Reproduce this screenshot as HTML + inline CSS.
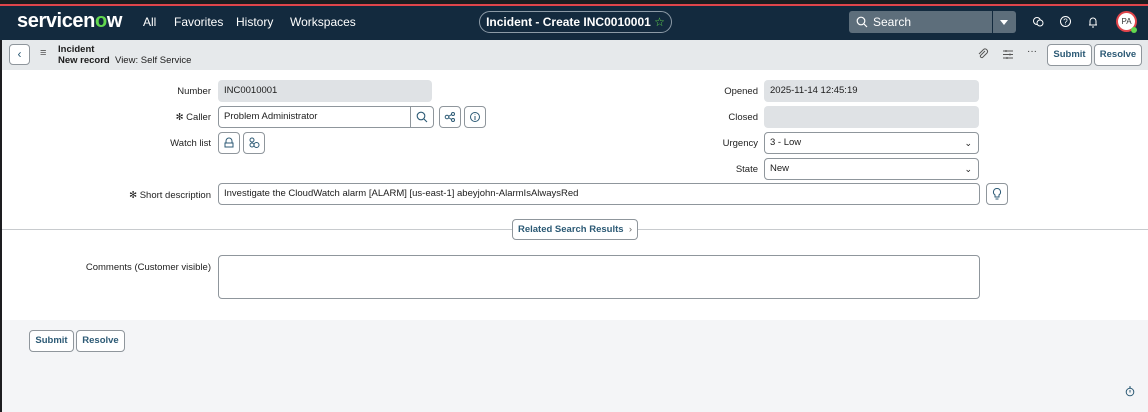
<!DOCTYPE html>
<html><head><style>
*{box-sizing:border-box;margin:0;padding:0}
body{width:1148px;height:412px;overflow:hidden;background:#1d1d20;font-family:"Liberation Sans",sans-serif;position:relative;font-size:9.5px;color:#1c1c1c}
#top{position:absolute;left:0;top:0;width:1148px;height:4px;background:#1d1d20}
#red{position:absolute;left:0;top:4px;width:1148px;height:2px;background:#e0454b}
#nav{position:absolute;left:0;top:6px;width:1148px;height:34px;background:#132a3e;color:#fff}
.abs{position:absolute}
#page{position:absolute;left:2px;top:40px;width:1146px;height:372px;background:#fff}
#sub{position:absolute;left:0;top:0;width:1146px;height:30px;background:#e6e9eb}
.btn{position:absolute;border:1px solid #8f969c;border-radius:4px;background:#fff;color:#2c5a75;font-weight:bold;font-size:9.5px;text-align:center}
.lbl{position:absolute;text-align:right;font-size:9.5px;color:#222}
.ro{position:absolute;background:#dfe2e5;border-radius:4px;font-size:9.5px;padding-left:6px}
.in{position:absolute;background:#fff;border:1px solid #8f969c;border-radius:4px;font-size:9.5px;padding-left:5px}
.ib{position:absolute;border:1px solid #8f969c;border-radius:4px;background:#fff}
</style></head><body>
<div id="top"></div><div id="red"></div>
<div id="nav">
<div class="abs" style="left:17px;top:4px;font-size:20px;font-weight:bold;letter-spacing:-0.4px">servicen<span style="color:#62d84e">o</span>w</div>
<div class="abs" style="left:143px;top:9px;font-size:12px">All</div>
<div class="abs" style="left:174px;top:9px;font-size:12px">Favorites</div>
<div class="abs" style="left:236px;top:9px;font-size:12px">History</div>
<div class="abs" style="left:290px;top:9px;font-size:12px">Workspaces</div>
<div class="abs" style="left:479px;top:5px;width:193px;height:22px;border:1px solid #8c9aa6;border-radius:11px;text-align:center;font-size:12px;font-weight:bold;line-height:20px">Incident - Create INC0010001 <span style="color:#62d84e;font-weight:normal">☆</span></div>
<div class="abs" style="left:849px;top:5px;width:143px;height:22px;background:#5d6e7b;border-radius:3px 0 0 3px;font-size:12px;line-height:22px;padding-left:24px">Search</div>
<svg class="abs" style="left:856px;top:10px" width="12" height="12"><circle cx="5" cy="5" r="3.8" fill="none" stroke="#fff" stroke-width="1.2"/><path d="M8 8l3 3" stroke="#fff" stroke-width="1.2"/></svg>
<div class="abs" style="left:993px;top:5px;width:23px;height:22px;background:#5d6e7b;border-radius:0 3px 3px 0"></div>
<div class="abs" style="left:1000px;top:14px;border-left:4px solid transparent;border-right:4px solid transparent;border-top:5px solid #fff"></div>
<svg class="abs" style="left:1032px;top:10px" width="12" height="12"><circle cx="5" cy="5" r="3.5" fill="none" stroke="#fff"/><circle cx="8" cy="7" r="3" fill="#132a3e" stroke="#fff"/></svg>
<svg class="abs" style="left:1059px;top:9px" width="13" height="13"><circle cx="6.5" cy="6.5" r="5" fill="none" stroke="#fff"/><text x="4.3" y="9.5" font-size="8" fill="#fff" font-family="Liberation Sans">?</text></svg>
<svg class="abs" style="left:1087px;top:9px" width="12" height="13"><path d="M2 10h8M3 10V6a3 3 0 016 0v4M5 12h2" fill="none" stroke="#fff"/></svg>
<div class="abs" style="left:1116px;top:5px;width:21px;height:21px;border-radius:50%;background:#e0454b;padding:2px"><div style="width:17px;height:17px;border-radius:50%;background:#fff;color:#333;font-size:8px;line-height:17px;text-align:center">PA</div></div>
<div class="abs" style="left:1131px;top:21px;width:6px;height:6px;border-radius:50%;background:#62d84e"></div>
</div>
<div id="page">
<div id="sub">
<div class="btn" style="left:7px;top:4px;width:21px;height:21px;line-height:19px;font-weight:normal;font-size:12px">‹</div>
<div class="abs" style="left:38px;top:7px;font-size:11px;color:#555">≡</div>
<div class="abs" style="left:56px;top:4px;font-weight:bold">Incident</div>
<div class="abs" style="left:56px;top:15px"><b>New record</b> &nbsp;View: Self Service</div>
<svg class="abs" style="left:975px;top:8px" width="12" height="13"><path d="M8 3L3.5 7.5a1.5 1.5 0 002 2L10 5a2.5 2.5 0 00-3.5-3.5L2 6" fill="none" stroke="#555"/></svg>
<svg class="abs" style="left:1000px;top:9px" width="12" height="11"><path d="M1 2h10M1 5.5h10M1 9h10" stroke="#555"/><path d="M4 1v2M8 4.5v2M5 8v2" stroke="#555"/></svg>
<div class="abs" style="left:1025px;top:6px;font-size:10px;color:#333">···</div>
<div class="btn" style="left:1045px;top:4px;width:45px;height:22px;line-height:20px">Submit</div>
<div class="btn" style="left:1092px;top:4px;width:48px;height:22px;line-height:20px">Resolve</div>
</div>
<div class="lbl" style="left:100px;top:46px;width:109px">Number</div>
<div class="ro" style="left:216px;top:40px;width:214px;height:22px;line-height:22px">INC0010001</div>
<div class="lbl" style="left:100px;top:72px;width:109px">✻ Caller</div>
<div class="in" style="left:216px;top:66px;width:216px;height:22px;line-height:20px">Problem Administrator</div>
<div class="abs" style="left:408px;top:66px;width:1px;height:22px;background:#8f969c"></div>
<svg class="abs" style="left:414px;top:71px" width="12" height="12"><circle cx="5" cy="5" r="3.8" fill="none" stroke="#2c5a75" stroke-width="1.1"/><path d="M8 8l3 3" stroke="#2c5a75" stroke-width="1.1"/></svg>
<div class="ib" style="left:437px;top:66px;width:22px;height:22px"></div>
<svg class="abs" style="left:442px;top:71px" width="12" height="12"><circle cx="3" cy="6" r="1.8" fill="none" stroke="#2c5a75"/><circle cx="9" cy="3" r="1.5" fill="none" stroke="#2c5a75"/><circle cx="9" cy="9" r="1.5" fill="none" stroke="#2c5a75"/><path d="M4.5 5.5L7.5 3.5M4.5 6.5L7.5 8.5" stroke="#2c5a75"/></svg>
<div class="ib" style="left:462px;top:66px;width:22px;height:22px"></div>
<svg class="abs" style="left:467px;top:71px" width="12" height="12"><circle cx="6" cy="6" r="4.5" fill="none" stroke="#2c5a75"/><path d="M6 5v4M6 3.5v.5" stroke="#2c5a75"/></svg>
<div class="lbl" style="left:100px;top:98px;width:109px">Watch list</div>
<div class="ib" style="left:216px;top:92px;width:22px;height:22px"></div>
<svg class="abs" style="left:221px;top:97px" width="12" height="12"><path d="M3 6V4a3 3 0 016 0v2M2 6h8v4H2z" fill="none" stroke="#2c5a75"/></svg>
<div class="ib" style="left:241px;top:92px;width:22px;height:22px"></div>
<svg class="abs" style="left:246px;top:97px" width="12" height="12"><circle cx="4" cy="3" r="2" fill="none" stroke="#2c5a75"/><circle cx="4" cy="8" r="2" fill="none" stroke="#2c5a75"/><circle cx="8.5" cy="8" r="2.5" fill="none" stroke="#2c5a75"/></svg>
<div class="lbl" style="left:100px;top:150px;width:109px">✻ Short description</div>
<div class="in" style="left:216px;top:143px;width:762px;height:22px;line-height:20px">Investigate the CloudWatch alarm [ALARM] [us-east-1] abeyjohn-AlarmIsAlwaysRed</div>
<div class="ib" style="left:984px;top:143px;width:22px;height:22px"></div>
<svg class="abs" style="left:989px;top:147px" width="12" height="14"><path d="M6 1.5a3.5 3.5 0 00-2 6.4V10h4V7.9a3.5 3.5 0 00-2-6.4zM4.5 12h3" fill="none" stroke="#2c5a75"/></svg>
<div class="lbl" style="left:650px;top:46px;width:106px">Opened</div>
<div class="ro" style="left:762px;top:40px;width:215px;height:22px;line-height:22px">2025-11-14 12:45:19</div>
<div class="lbl" style="left:650px;top:72px;width:106px">Closed</div>
<div class="ro" style="left:762px;top:66px;width:215px;height:22px"></div>
<div class="lbl" style="left:650px;top:98px;width:106px">Urgency</div>
<div class="in" style="left:762px;top:92px;width:215px;height:22px;line-height:20px">3 - Low<span style="position:absolute;right:6px;font-size:9px">⌄</span></div>
<div class="lbl" style="left:650px;top:124px;width:106px">State</div>
<div class="in" style="left:762px;top:118px;width:215px;height:22px;line-height:20px">New<span style="position:absolute;right:6px;font-size:9px">⌄</span></div>
<div class="abs" style="left:0;top:189px;width:1146px;height:1px;background:#c8cbce"></div>
<div class="btn" style="left:510px;top:179px;width:126px;height:21px;line-height:19px">Related Search Results &nbsp;<span style="font-weight:normal;color:#666">›</span></div>
<div class="lbl" style="left:60px;top:222px;width:149px">Comments (Customer visible)</div>
<div class="in" style="left:216px;top:215px;width:762px;height:44px"></div>
<div class="abs" style="left:0;top:280px;width:1146px;height:92px;background:#f4f5f7"></div>
<div class="btn" style="left:27px;top:290px;width:45px;height:22px;line-height:20px">Submit</div>
<div class="btn" style="left:74px;top:290px;width:49px;height:22px;line-height:20px">Resolve</div>
<svg class="abs" style="left:1123px;top:346px" width="10" height="11"><circle cx="5" cy="6" r="3.8" fill="none" stroke="#2c5a75"/><path d="M5 4v2.5M4 1h2" stroke="#2c5a75"/></svg>
</div>
</body></html>
